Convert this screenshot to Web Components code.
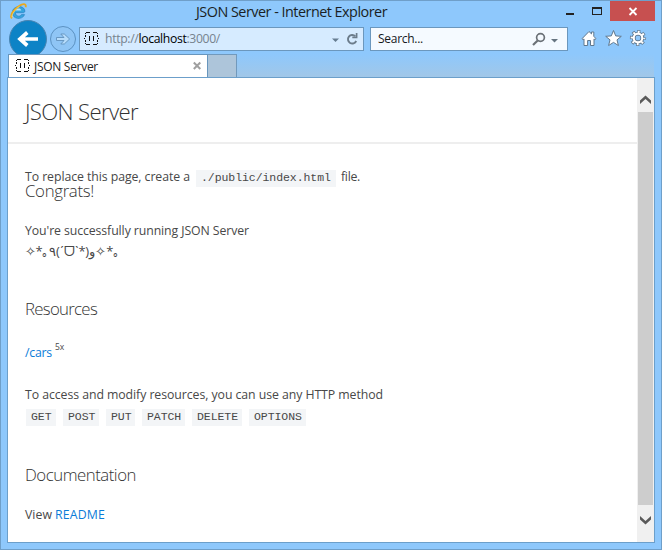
<!DOCTYPE html>
<html lang="en"><head><meta charset="utf-8"><title>JSON Server - Internet Explorer</title>
<style>html,body{margin:0;height:100%;overflow:hidden}</style></head>
<body><ie-window></ie-window>
<script>
const define = (name, html, ready) => customElements.define(name, class extends HTMLElement {
  connectedCallback() {
    if (this.shadowRoot) return;
    const t = document.createElement('template');
    t.innerHTML = html;
    this.attachShadow({mode: 'open'}).append(t.content.cloneNode(true));
    if (ready) ready(this);
  }
});

// A single line of text, tracked to fill the width given in "w".
define('ui-text', `<style>
:host{display:block;white-space:nowrap;flex:none}
span{display:inline-block;vertical-align:top}
</style><span><slot></slot></span>`, el => {
  const w = +el.getAttribute('w');
  if (!w) return;
  const s = el.shadowRoot.querySelector('span');
  const n = [...el.textContent].length;
  s.style.letterSpacing = ((w - s.getBoundingClientRect().width) / n) + 'px';
  el.style.width = w + 'px';
});

define('code-chip', `<style>
:host{display:block;box-sizing:border-box;flex:none;background:#f3f5f7;color:#484848;
font:11.5px "Liberation Mono","Courier New",monospace;height:17px;line-height:16px;padding-left:5px;white-space:nowrap;letter-spacing:-.07px}
</style><slot></slot>`, el => el.style.width = el.getAttribute('w') + 'px');

define('face-icon', `<style>:host{display:block;width:16px;height:16px;flex:none}svg{display:block}</style>
<svg width="16" height="16" shape-rendering="crispEdges" fill="#111">
<path d="M2 1h4v1H2zM9 1h4v1H9zM1 2h1v1H1zM13 2h1v1h-1zM1 4h1v2H1zM13 4h1v2h-1zM0 7h1v1H0zM14 7h1v1h-1zM1 9h1v2H1zM13 9h1v2h-1zM1 12h1v1H1zM13 12h1v1h-1zM2 13h4v1H2zM9 13h4v1H9zM5 5h1v5H5zM9 5h1v5H9z"/></svg>`);

define('title-bar', `<style>
:host{display:grid;grid-template-columns:196px 1fr 91px;height:22px;font:15px "Open Sans",sans-serif;color:#1a1f24}
.logo{padding:3px 0 0 10px}svg{display:block}ui-text{line-height:23px;font-size:14.4px}
.btns{display:flex}.btns svg{flex:none}
</style>
<div class="logo"><svg width="18" height="17" viewBox="0 0 18 17">
<path d="M13.6 9.7H5.3C5.6 13.8 10.6 14 11.4 11.6h3.2C12.5 17.3 2.1 16.7 2.3 9.3 2.6 2.3 14.8 1.4 15 8.6z" fill="#35a5df" stroke="#2479ba" stroke-width=".6"/>
<path d="M5.7 7.5h5.6C10.8 4.7 6.4 4.9 5.7 7.5z" fill="#b9e2fa"/>
<path d="M2 15.3C-.8 13.3 3.6 6.1 9 2.9 12.8.5 16.7.2 15.6 4.2" fill="none" stroke="#e9a91e" stroke-width="1.8"/>
<path d="M2 14.2C1.5 11.5 5.6 6 9.6 3.3" fill="none" stroke="#ffdf75" stroke-width=".7"/></svg></div>
<ui-text w="191">JSON Server - Internet Explorer</ui-text>
<div class="btns"><svg width="91" height="22" shape-rendering="crispEdges">
<path d="M2 13h8v2H2z" fill="#222"/><path d="M28 7h10v8H28zM29 9v5h8V9z" fill="#222" fill-rule="evenodd"/>
<path d="M46 1h45v20H46z" fill="#c75050"/><path d="M65.500 8l7 7M72.500 8l-7 7" stroke="#fff" stroke-width="1.8" shape-rendering="auto"/></svg></div>`);

define('nav-bar', `<style>
:host{display:flex;height:32px;font:12px "Open Sans",sans-serif;box-sizing:border-box;position:relative}
.arrows{width:79px;height:32px;flex:none}.arrows svg{display:block;overflow:visible}
.box{box-sizing:border-box;height:24px;margin-top:5px;border:1px solid #6b97bd;display:flex;align-items:center;flex:none}
.addr{width:285px;background:#d6ebff;padding-left:4px;color:#77838e}
.addr b{font-weight:400;color:#000}.addr ui-text{margin-left:5px;font-size:12.2px;line-height:24px}
.find{width:198px;margin-left:6px;background:#f5faff;color:#15191d;padding-left:7px}
.find ui-text{font-size:12px;line-height:24px}
.end{margin-left:auto;display:block;flex:none}.tools{display:block;margin:4px 0 0 12px;flex:none}
</style>
<div class="arrows"><svg width="79" height="32">
<circle cx="28" cy="17" r="18.500" fill="#0d83c6" stroke="#4984b1"/>
<path d="M38 17H21M27.300 10.500L20 17l7.300 6.500" fill="none" stroke="#fff" stroke-width="3.700"/>
<circle cx="63" cy="17" r="12.500" fill="#8fc5f5" stroke="#5c92c2"/>
<path d="M56.500 15.500h7.500L60.800 12h3.500l5.300 5-5.300 5h-3.500l3.200-3.500h-7.500z" fill="#b6dcfb" stroke="#6292bc" stroke-width=".9"/></svg></div>
<div class="box addr"><face-icon></face-icon><ui-text w="115"><span>http://</span><b>localhost</b>:3000/</ui-text>
<svg class="end" width="36" height="23"><path d="M5 10.500h7L8.500 14z" fill="#667d91"/><path d="M28.300 8.200A4.300 4.300 0 1 0 29.200 13" fill="none" stroke="#6b7c8b" stroke-width="1.900"/><path d="M25.300 9.300h4.300V5" fill="none" stroke="#6b7c8b" stroke-width="1.700"/></svg></div>
<div class="box find"><ui-text w="45">Search...</ui-text>
<svg class="end" width="37" height="23"><circle cx="10.500" cy="9.500" r="3.900" fill="none" stroke="#6b7177" stroke-width="1.700"/><path d="M7.700 12.500L3 17" stroke="#6b7177" stroke-width="2.200"/><path d="M21 11h7l-3.500 3.500z" fill="#667480"/></svg></div>
<svg class="tools" width="68" height="24" fill="#fff" stroke="#60788e" stroke-width="1" stroke-linejoin="round">
<path d="M2 12.700l7-7.200 2.500 2.400V6h2.300v4.300l2.200 2.400-1.100 1-.9-.8v6.600h-3.500v-5H7.600v5H4v-6.600l-.9.8z"/>
<path d="M33.500 4.500l2.200 5.400 5.600.4-4.300 3.600 1.400 5.600-4.900-3.100-4.900 3.100 1.400-5.600-4.300-3.600 5.600-.4z"/>
<g fill="none"><circle cx="58" cy="12" r="6.300" stroke-width="3.600" stroke-dasharray="2.900 2.050" stroke-dashoffset="1.450"/><circle cx="58" cy="12" r="4.300" stroke-width="4"/><circle cx="58" cy="12" r="5.900" stroke="#fff" stroke-width="2.800" stroke-dasharray="1.700 2.934" stroke-dashoffset=".85"/><circle cx="58" cy="12" r="4.300" stroke="#fff" stroke-width="2.200"/><circle cx="58" cy="12" r="2.300" fill="#8fc7fa" stroke="none"/></g></svg>`);

define('tab-strip', `<style>
:host{display:flex;height:23px;font:12px "Open Sans",sans-serif;color:#222;position:relative}
.tab{box-sizing:border-box;width:200px;height:23px;background:#fff;border:1px solid #6896bd;border-bottom:0;display:flex;align-items:center;padding-left:6px}
.tab ui-text{margin-left:3px;font-size:12px;line-height:24px;padding-top:1px}.tab svg{margin-left:auto}
.new{box-sizing:border-box;width:29px;height:23px;background:#adc5da;border:1px solid #7199bc;border-left:0;border-bottom:0}
</style>
<div class="tab"><face-icon></face-icon><ui-text w="64">JSON Server</ui-text>
<svg width="17" height="20"><path d="M3.800 6.500l6.500 6.500M10.300 6.500l-6.500 6.500" stroke="#a0a0a0" stroke-width="2"/></svg></div><div class="new"></div>`);

define('scroll-bar', `<style>:host{display:flex;flex-direction:column;width:17px;background:#f0f0f0}
i{display:block;flex:1;background:#cdcdcd;margin:0 1px}svg{display:block}</style>
<svg width="17" height="34"><path d="M3 26V22.500L8.500 17.500 14 22.500V26L8.500 21z" fill="#5a5a5a"/></svg><i></i>
<svg width="17" height="37"><path d="M3 11v3.500L8.500 19.500 14 14.500V11L8.500 16z" fill="#5a5a5a"/></svg>`);

define('json-page', `<style>
:host{display:flex;flex-direction:column;color:#484848;font:12.300px "Open Sans",sans-serif}
header{box-sizing:border-box;height:66px;border-bottom:2px solid #eee;padding:19px 0 0 17px;flex:none}
header ui-text{font-size:22.200px;font-weight:300;line-height:30px;color:#333}
main{display:flex;flex-direction:column;padding:23px 0 0 17px}
.row{display:flex;height:20px;line-height:20px;flex:none}
.h{font-size:16.800px;font-weight:300;color:#333}
a{color:#0a7cd8}
.chips{gap:7px;margin-left:1px}
</style>
<header><ui-text w="113">JSON Server</ui-text></header>
<main>
<div class="row"><ui-text w="165">To replace this page, create a</ui-text><code-chip w="140" style="margin:3px 5px 0 6px">./public/index.html</code-chip><ui-text w="19">file.</ui-text></div>
<div class="row h" style="margin-top:-6px"><ui-text w="69">Congrats!</ui-text></div>
<div class="row" style="margin-top:20px"><ui-text w="224">You're successfully running JSON Server</ui-text></div>
<div class="row" style="margin-top:0"><ui-text w="92" style="font-size:13px">✧*｡٩(ˊᗜˋ*)و✧*｡</ui-text></div>
<div class="row h" style="margin-top:38px"><ui-text w="72">Resources</ui-text></div>
<div class="row" style="margin-top:24px"><a><ui-text w="27">/cars</ui-text></a><ui-text w="9" style="margin-left:3px;font-size:8.500px;line-height:10px;margin-top:-1px">5x</ui-text></div>
<div class="row" style="margin-top:22px"><ui-text w="358">To access and modify resources, you can use any HTTP method</ui-text></div>
<div class="row chips" style="margin-top:4px"><code-chip w="30">GET</code-chip><code-chip w="36">POST</code-chip><code-chip w="29">PUT</code-chip><code-chip w="43">PATCH</code-chip><code-chip w="50">DELETE</code-chip><code-chip w="57">OPTIONS</code-chip></div>
<div class="row h" style="margin-top:36px"><ui-text w="111">Documentation</ui-text></div>
<div class="row" style="margin-top:20px"><ui-text w="27">View</ui-text><a style="margin-left:3px"><ui-text w="50">README</ui-text></a></div>
</main>`);

define('ie-window', `<style>
:host{display:flex;flex-direction:column;box-sizing:border-box;width:662px;height:550px;background:#8ec8fc;border:1px solid #6f9fc9;overflow:hidden}
title-bar,nav-bar{flex:none}title-bar{margin-top:-1px;margin-left:-1px;padding-right:6px}
nav-bar{margin-left:-1px}
tab-strip{flex:none;background:linear-gradient(to bottom,#8ec8fc,#a1c7e8);margin:0 7px}
.view{display:flex;box-sizing:border-box;width:648px;height:466px;margin-left:6px;border:1px solid #6c9fca;background:#fff}
json-page{flex:1}
</style>
<title-bar></title-bar><nav-bar></nav-bar><tab-strip></tab-strip><div class="view"><json-page></json-page><scroll-bar></scroll-bar></div>`);
</script></body></html>
